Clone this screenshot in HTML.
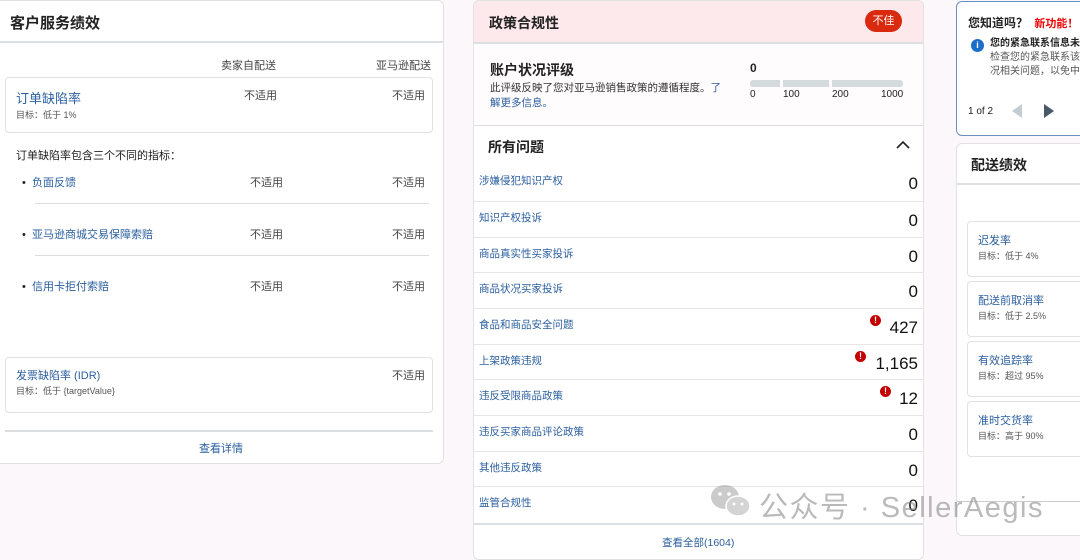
<!DOCTYPE html>
<html><head><meta charset="utf-8"><style>
*{box-sizing:border-box;margin:0;padding:0}
body{width:1080px;height:545px;overflow:hidden;background:#fbf7fb;font-family:"Liberation Sans","Noto Sans CJK SC",sans-serif;color:#222;position:relative;font-size:11px}
.card{position:absolute;background:#fff;border:1px solid #e2e2e2;border-radius:6px}
.a{color:#2b5f9e}
.abs{position:absolute}
.g{color:#555;font-size:9px}
.sep{position:absolute;left:0;right:0;height:2px;background:#dde0e2}
.row{position:absolute;left:0;right:0;height:36px;border-top:1px solid #e6e6e6}
.row .l{position:absolute;left:5px;top:8px;font-size:10.5px;color:#2b5f9e}
.row .n{position:absolute;right:5px;top:9px;font-size:17px;color:#111}
.ex{position:absolute;width:11px;height:11px;border-radius:50%;background:#c40000;color:#fff;font-size:9px;font-weight:bold;text-align:center;line-height:11px}
</style></head><body>

<div class="card" style="left:-6px;top:0;width:450px;height:464px">
  <div class="abs" style="left:15px;top:11px;font-size:15px;font-weight:bold">客户服务绩效</div>
  <div class="sep" style="top:40px"></div>
  <div class="abs" style="left:226px;top:56px;color:#444">卖家自配送</div>
  <div class="abs" style="left:381px;top:56px;color:#444">亚马逊配送</div>
  <div class="abs" style="left:10px;top:76px;width:428px;height:56px;border:1px solid #e2e2e2;border-radius:4px">
    <div class="abs a" style="left:10px;top:10px;font-size:13px">订单缺陷率</div>
    <div class="abs g" style="left:10px;top:30px">目标：低于 1%</div>
    <div class="abs" style="left:238px;top:9px;color:#444">不适用</div>
    <div class="abs" style="left:386px;top:9px;color:#444">不适用</div>
  </div>
  <div class="abs" style="left:21px;top:146px;color:#222">订单缺陷率包含三个不同的指标：</div>
  <div class="abs" style="left:27px;top:173px">•&nbsp;&nbsp;<span class="a">负面反馈</span></div>
  <div class="abs" style="left:255px;top:173px;color:#444">不适用</div><div class="abs" style="left:397px;top:173px;color:#444">不适用</div>
  <div class="abs" style="left:40px;top:202px;width:394px;height:1px;background:#ddd"></div>
  <div class="abs" style="left:27px;top:225px">•&nbsp;&nbsp;<span class="a">亚马逊商城交易保障索赔</span></div>
  <div class="abs" style="left:255px;top:225px;color:#444">不适用</div><div class="abs" style="left:397px;top:225px;color:#444">不适用</div>
  <div class="abs" style="left:40px;top:254px;width:394px;height:1px;background:#ddd"></div>
  <div class="abs" style="left:27px;top:277px">•&nbsp;&nbsp;<span class="a">信用卡拒付索赔</span></div>
  <div class="abs" style="left:255px;top:277px;color:#444">不适用</div><div class="abs" style="left:397px;top:277px;color:#444">不适用</div>
  <div class="abs" style="left:10px;top:356px;width:428px;height:56px;border:1px solid #e2e2e2;border-radius:4px">
    <div class="abs a" style="left:10px;top:9px;font-size:11px">发票缺陷率 (IDR)</div>
    <div class="abs g" style="left:10px;top:26px">目标：低于 {targetValue}</div>
    <div class="abs" style="left:386px;top:9px;color:#444">不适用</div>
  </div>
  <div class="abs" style="left:10px;top:429px;width:428px;height:2px;background:#dde0e2"></div>
  <div class="abs a" style="left:204px;top:439px">查看详情</div>
</div>

<div class="card" style="left:473px;top:0;width:451px;height:560px;overflow:hidden">
  <div class="abs" style="left:0;top:0;right:0;height:41px;background:#fde8ec"></div>
  <div class="abs" style="left:15px;top:12px;font-size:14px;font-weight:bold">政策合规性</div>
  <div class="abs" style="left:391px;top:9px;width:37px;height:22px;border-radius:11px;background:#d9290e;color:#fff;font-size:11px;text-align:center;line-height:22px">不佳</div>
  <div class="sep" style="top:41px"></div>
  <div class="abs" style="left:0;top:43px;right:0;height:82px;background:#fffcfe"></div>
  <div class="abs" style="left:16px;top:59px;font-size:14px;font-weight:bold">账户状况评级</div>
  <div class="abs" style="left:16px;top:80px;width:240px;font-size:10.5px;line-height:15px;color:#333">此评级反映了您对亚马逊销售政策的遵循程度。<span class="a">了解更多信息。</span></div>
  <div class="abs" style="left:276px;top:60px;font-size:12px;font-weight:bold">0</div>
  <div class="abs" style="left:276px;top:79px;width:30px;height:7px;background:#d5dadd;border-radius:3px 0 0 3px"></div>
  <div class="abs" style="left:309px;top:79px;width:46px;height:7px;background:#d5dadd"></div>
  <div class="abs" style="left:358px;top:79px;width:71px;height:7px;background:#d5dadd;border-radius:0 3px 3px 0"></div>
  <div class="abs" style="left:276px;top:88px;font-size:10px">0</div>
  <div class="abs" style="left:309px;top:88px;font-size:10px">100</div>
  <div class="abs" style="left:358px;top:88px;font-size:10px">200</div>
  <div class="abs" style="left:407px;top:88px;font-size:10px">1000</div>
  <div class="sep" style="top:124px;height:1px"></div>
  <div class="abs" style="left:14px;top:136px;font-size:14px;font-weight:bold">所有问题</div>
  <svg class="abs" style="left:422px;top:139px" width="14" height="10"><path d="M1 8 L7 2 L13 8" fill="none" stroke="#222" stroke-width="1.6"/></svg>
  <div class="row" style="top:164px;border-top:none"><span class="l">涉嫌侵犯知识产权</span><span class="n">0</span></div>
  <div class="row" style="top:200px"><span class="l">知识产权投诉</span><span class="n">0</span></div>
  <div class="row" style="top:236px"><span class="l">商品真实性买家投诉</span><span class="n">0</span></div>
  <div class="row" style="top:271px"><span class="l">商品状况买家投诉</span><span class="n">0</span></div>
  <div class="row" style="top:307px"><span class="l">食品和商品安全问题</span><span class="ex" style="left:396px;top:6px">!</span><span class="n">427</span></div>
  <div class="row" style="top:343px"><span class="l">上架政策违规</span><span class="ex" style="left:381px;top:6px">!</span><span class="n">1,165</span></div>
  <div class="row" style="top:378px"><span class="l">违反受限商品政策</span><span class="ex" style="left:406px;top:6px">!</span><span class="n">12</span></div>
  <div class="row" style="top:414px"><span class="l">违反买家商品评论政策</span><span class="n">0</span></div>
  <div class="row" style="top:450px"><span class="l">其他违反政策</span><span class="n">0</span></div>
  <div class="row" style="top:485px"><span class="l">监管合规性</span><span class="n">0</span></div>
  <div class="sep" style="top:522px"></div>
  <div class="abs a" style="left:188px;top:534px;font-size:10.5px">查看全部(1604)</div>
</div>

<div class="card" style="left:956px;top:1px;width:140px;height:135px;border:1px solid #6d8fbf">
  <div class="abs" style="left:11px;top:12px;font-size:12px;font-weight:bold">您知道吗？ <span style="color:#e00;font-size:11px;margin-left:3px">新功能！</span></div>
  <div class="abs" style="left:14px;top:37px;width:13px;height:13px;border-radius:50%;background:#1c6fc9;color:#fff;font-size:9px;font-weight:bold;text-align:center;line-height:13px">i</div>
  <div class="abs" style="left:33px;top:35px;font-size:10px;line-height:14px;white-space:nowrap;color:#555"><b style="color:#222">您的紧急联系信息未</b><br>检查您的紧急联系该<br>况相关问题，以免中</div>
  <div class="abs" style="left:11px;top:104px;font-size:10px">1 of 2</div>
  <svg class="abs" style="left:53px;top:101px" width="50" height="16"><path d="M12 1 L2 8 L12 15Z" fill="#c4cbd3"/><path d="M34 1 L44 8 L34 15Z" fill="#4a5868"/></svg>
</div>
<div class="card" style="left:956px;top:143px;width:140px;height:393px">
  <div class="abs" style="left:14px;top:11px;font-size:14px;font-weight:bold">配送绩效</div>
  <div class="sep" style="top:39px"></div>
  <div class="abs" style="left:10px;top:77px;width:140px;height:56px;border:1px solid #e2e2e2;border-radius:4px"><div class="abs a" style="left:10px;top:10px">迟发率</div><div class="abs g" style="left:10px;top:27px">目标：低于 4%</div></div>
  <div class="abs" style="left:10px;top:137px;width:140px;height:56px;border:1px solid #e2e2e2;border-radius:4px"><div class="abs a" style="left:10px;top:10px">配送前取消率</div><div class="abs g" style="left:10px;top:27px">目标：低于 2.5%</div></div>
  <div class="abs" style="left:10px;top:197px;width:140px;height:56px;border:1px solid #e2e2e2;border-radius:4px"><div class="abs a" style="left:10px;top:10px">有效追踪率</div><div class="abs g" style="left:10px;top:27px">目标：超过 95%</div></div>
  <div class="abs" style="left:10px;top:257px;width:140px;height:56px;border:1px solid #e2e2e2;border-radius:4px"><div class="abs a" style="left:10px;top:10px">准时交货率</div><div class="abs g" style="left:10px;top:27px">目标：高于 90%</div></div>
  <div class="abs" style="left:0;top:357px;width:140px;height:1px;background:#ccc"></div>
</div>

<svg class="abs" style="left:709px;top:483px;opacity:.5" width="44" height="36"><ellipse cx="16" cy="14" rx="14" ry="12" fill="#999"/><ellipse cx="29" cy="23" rx="12" ry="10" fill="#aaa" stroke="#fff" stroke-width="1.5"/><circle cx="11" cy="11" r="1.8" fill="#fff"/><circle cx="20" cy="11" r="1.8" fill="#fff"/><circle cx="25" cy="21" r="1.5" fill="#fff"/><circle cx="33" cy="21" r="1.5" fill="#fff"/></svg>
<div class="abs" style="left:759px;top:484px;font-size:29px;color:rgba(130,130,130,.55);white-space:nowrap;letter-spacing:1.5px">公众号 · SellerAegis</div>
</body></html>
